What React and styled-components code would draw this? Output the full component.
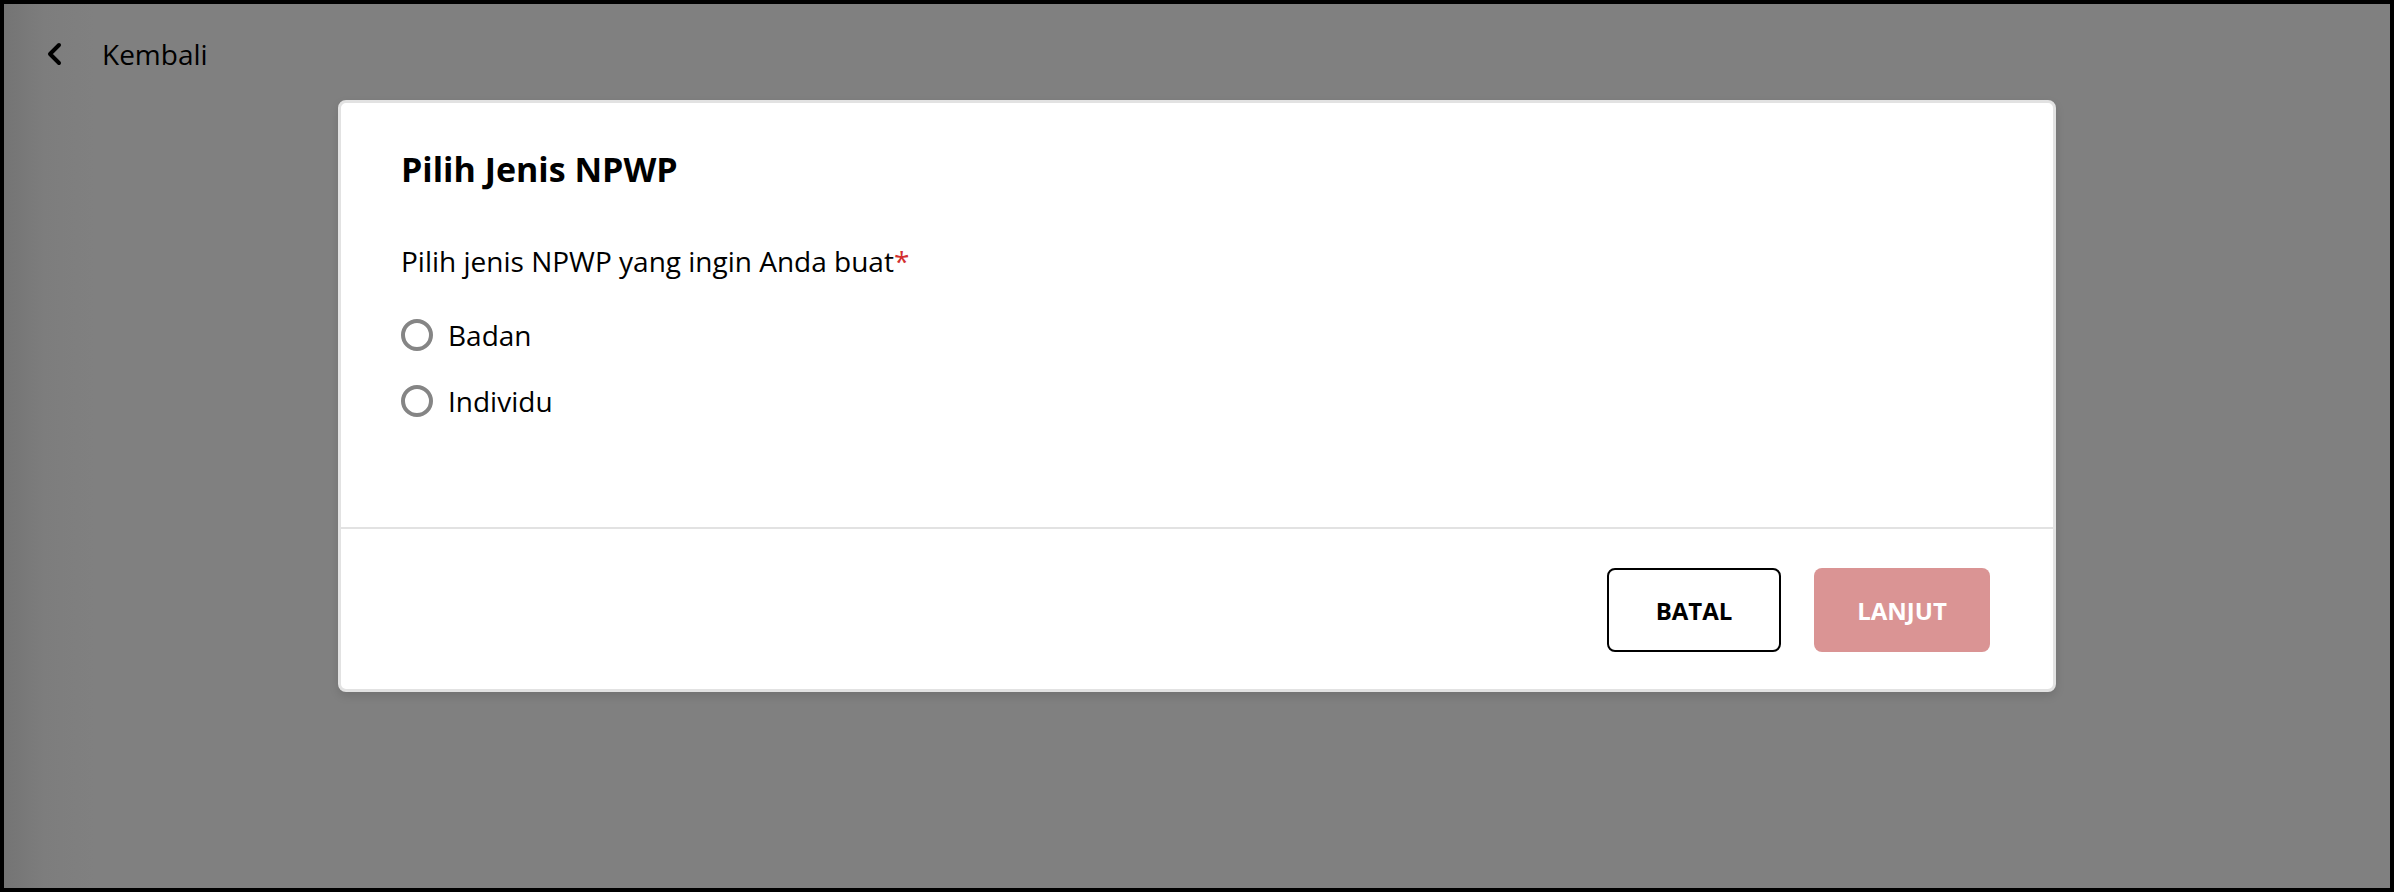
import React from 'react';
import styled, { createGlobalStyle } from 'styled-components';

const GlobalStyle = createGlobalStyle`
  html, body {
    margin: 0;
    padding: 0;
  }
  body {
    font-family: "Open Sans", "Noto Sans", sans-serif;
    color: #000;
  }
  * {
    box-sizing: border-box;
  }
`;

const Frame = styled.div`
  height: 100vh;
  border: 4px solid #000;
  background: linear-gradient(to right, #747474 0px, #7d7d7d 40px, #808080 90px);
  display: flex;
  flex-direction: column;
`;

const TopBar = styled.div`
  display: flex;
  align-items: center;
  gap: 40px;
  height: 40px;
  margin: 30px 0 26px 42px;
  font-size: 28px;
  cursor: pointer;
`;

const Modal = styled.div`
  width: 1718px;
  margin: 0 auto;
  background: #fff;
  border: 3px solid #e2e2e2;
  border-radius: 8px;
  box-shadow: 0 4px 10px rgba(0, 0, 0, 0.12);
  display: flex;
  flex-direction: column;
`;

const Body = styled.div`
  padding: 42px 60px 107px;
  border-bottom: 2px solid #e2e2e2;
  display: flex;
  flex-direction: column;
`;

const Title = styled.h2`
  margin: 0 0 48px;
  font-size: 34px;
  font-weight: 700;
  line-height: 49px;
`;

const Label = styled.div`
  font-size: 28px;
  line-height: 38px;
  margin-bottom: 36px;
`;

const Required = styled.span`
  color: #d32f2f;
`;

const Options = styled.div`
  display: flex;
  flex-direction: column;
  gap: 28px;
`;

const Option = styled.label`
  display: flex;
  align-items: center;
  gap: 15px;
  font-size: 28px;
  line-height: 38px;
  cursor: pointer;
`;

const Radio = styled.span`
  width: 32px;
  height: 32px;
  border: 4px solid #858585;
  border-radius: 50%;
  flex-shrink: 0;
`;

const Footer = styled.div`
  display: flex;
  justify-content: flex-end;
  gap: 33px;
  padding: 39px 63px 37px 0;
`;

const Button = styled.button`
  width: ${p => p.$w}px;
  height: 84px;
  border-radius: 8px;
  font-family: inherit;
  font-size: 24px;
  font-weight: 700;
  border: ${p => (p.$primary ? 'none' : '2px solid #000')};
  background: ${p => (p.$primary ? '#da9494' : '#fff')};
  color: ${p => (p.$primary ? '#fff' : '#000')};
  cursor: pointer;
`;

const ChevronLeft = () => (
  <svg width="16" height="24" viewBox="0 0 16 24" fill="none">
    <polyline points="13,3 4,12 13,21" stroke="#000" strokeWidth="4" strokeLinecap="round" strokeLinejoin="round" />
  </svg>
);

const App = () => (
  <>
    <GlobalStyle />
    <Frame>
      <TopBar>
        <ChevronLeft />
        <span>Kembali</span>
      </TopBar>
      <Modal>
        <Body>
          <Title>Pilih Jenis NPWP</Title>
          <Label>
            Pilih jenis NPWP yang ingin Anda buat<Required>*</Required>
          </Label>
          <Options>
            <Option>
              <Radio />
              Badan
            </Option>
            <Option>
              <Radio />
              Individu
            </Option>
          </Options>
        </Body>
        <Footer>
          <Button $w={174}>BATAL</Button>
          <Button $w={176} $primary>LANJUT</Button>
        </Footer>
      </Modal>
    </Frame>
  </>
);

export default App;
